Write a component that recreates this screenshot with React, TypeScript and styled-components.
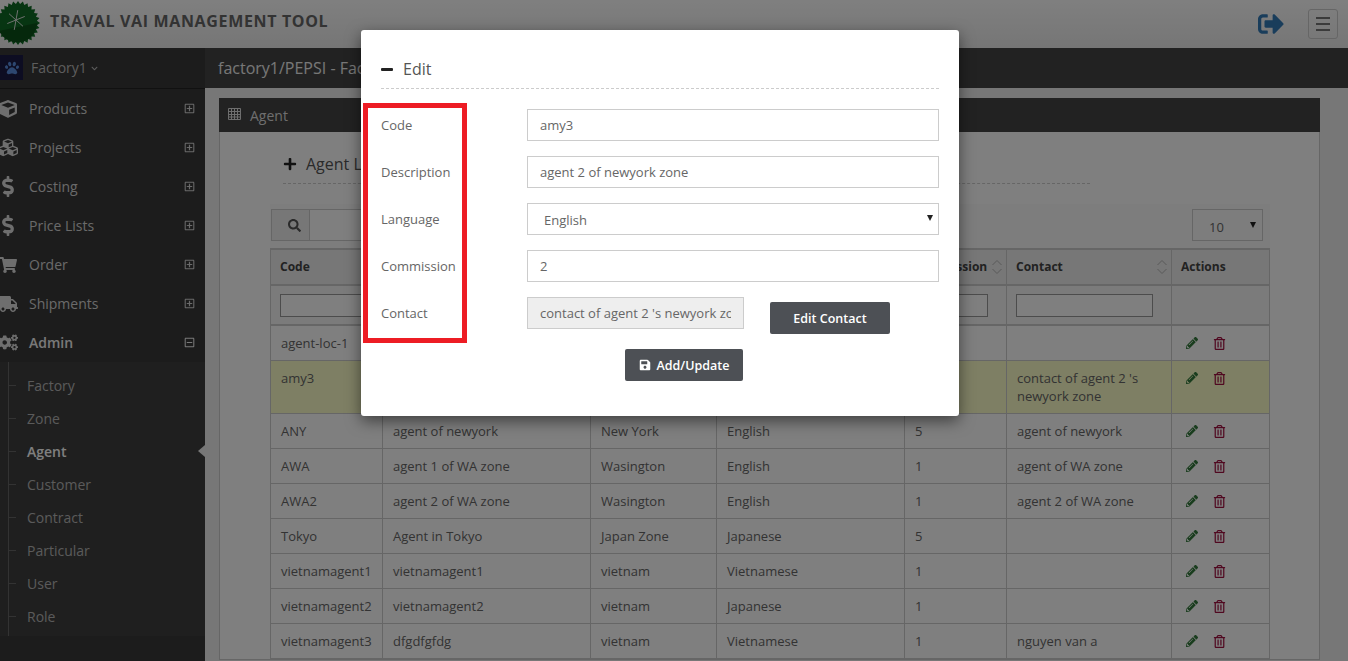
import styled, { createGlobalStyle } from "styled-components";
import {
  FaChevronDown,
  FaCogs,
  FaCube,
  FaCubes,
  FaDollarSign,
  FaPaw,
  FaPencilAlt,
  FaPlus,
  FaRegMinusSquare,
  FaRegPlusSquare,
  FaRegTrashAlt,
  FaSave,
  FaSearch,
  FaShoppingCart,
  FaSignOutAlt,
  FaTruck,
} from "react-icons/fa";

const menu = [
  { label: "Products", icon: <FaCube size={18} /> },
  { label: "Projects", icon: <FaCubes size={21} /> },
  { label: "Costing", icon: <FaDollarSign size={21} /> },
  { label: "Price Lists", icon: <FaDollarSign size={21} /> },
  { label: "Order", icon: <FaShoppingCart size={18} /> },
  { label: "Shipments", icon: <FaTruck size={20} /> },
];

const subMenu = ["Factory", "Zone", "Agent", "Customer", "Contract", "Particular", "User", "Role"];

const rows = [
  ["agent-loc-1", "agent of location 1", "New York", "English", "", ""],
  ["amy3", "agent 2 of newyork zone", "New York", "English", "2", "contact of agent 2 's newyork zone"],
  ["ANY", "agent of newyork", "New York", "English", "5", "agent of newyork"],
  ["AWA", "agent 1 of WA zone", "Wasington", "English", "1", "agent of WA zone"],
  ["AWA2", "agent 2 of WA zone", "Wasington", "English", "1", "agent 2 of WA zone"],
  ["Tokyo", "Agent in Tokyo", "Japan Zone", "Japanese", "5", ""],
  ["vietnamagent1", "vietnamagent1", "vietnam", "Vietnamese", "1", ""],
  ["vietnamagent2", "vietnamagent2", "vietnam", "Japanese", "1", ""],
  ["vietnamagent3", "dfgdfgfdg", "vietnam", "Vietnamese", "1", "nguyen van a"],
];

const columns = [
  { title: "Code", width: 112 },
  { title: "Description", width: 208 },
  { title: "Zone", width: 126 },
  { title: "Language", width: 188 },
  { title: "Commission", width: 102 },
  { title: "Contact", width: 165 },
];

// starburst edge of the logo
const burst = Array.from({ length: 56 }, (_, i) => {
  const r = i % 2 === 0 ? 22 : 19;
  const a = (i / 56) * Math.PI * 2;
  return `${22 + r * Math.cos(a)},${22 + r * Math.sin(a)}`;
}).join(" ");

const Logo = () => (
  <LogoSvg viewBox="0 0 44 44" width={44} height={44}>
    <polygon points={burst} fill="#0f6a24" />
    <path d="M3 30 A20 20 0 0 0 41 22 Z" fill="#0b5019" />
    <path
      d="M18 8 L18 28 M10 13 L26 23 M10 23 L26 13"
      transform="translate(2 1) rotate(10 18 18)"
      stroke="#e6e6e6"
      strokeWidth="0.9"
      fill="none"
    />
  </LogoSvg>
);

const SortIcon = () => (
  <SortSvg viewBox="0 0 12 16" width={12} height={16}>
    <path d="M1.5 6 L6 1.5 L10.5 6 M1.5 10 L6 14.5 L10.5 10" stroke="#b5b5b5" fill="none" />
  </SortSvg>
);

const GridIcon = () => (
  <svg viewBox="0 0 13 12" width={13} height={12}>
    <path
      d="M.5 .5H12.5V11.5H.5Z M.5 3.5H12.5 M.5 6.5H12.5 M.5 9H12.5 M3.5 .5V11.5 M6.5 .5V11.5 M9.5 .5V11.5"
      stroke="currentColor"
      fill="none"
    />
  </svg>
);

const App = () => {
  return (
    <Page>
      <GlobalStyle />
      <Header>
        <Logo />
        <Brand>TRAVAL VAI MANAGEMENT TOOL</Brand>
        <HeaderTools>
          <FaSignOutAlt size={26} color="#337ab7" />
          <Burger>
            <span />
            <span />
            <span />
          </Burger>
        </HeaderTools>
      </Header>

      <Body>
        <Sidebar>
          <FactoryRow>
            <PawBox>
              <FaPaw size={14} color="#5b8fe0" />
            </PawBox>
            Factory1
            <FaChevronDown size={7} />
          </FactoryRow>
          {menu.map((m) => (
            <MenuRow key={m.label}>
              <MenuIcon>{m.icon}</MenuIcon>
              {m.label}
              <FaRegPlusSquare size={11} />
            </MenuRow>
          ))}
          <MenuRow $open>
            <MenuIcon>
              <FaCogs size={21} />
            </MenuIcon>
            Admin
            <FaRegMinusSquare size={11} />
          </MenuRow>
          <SubList>
            {subMenu.map((s) => (
              <SubItem key={s} $active={s === "Agent"}>
                {s}
              </SubItem>
            ))}
          </SubList>
        </Sidebar>

        <Main>
          <TitleBar>factory1/PEPSI - Factory</TitleBar>
          <Panel>
            <PanelHead>
              <GridIcon />
              Agent
            </PanelHead>
            <PanelBody>
              <ListTitle>
                <FaPlus size={14} />
                Agent List
              </ListTitle>
              <Toolbar>
                <SearchBox>
                  <SearchAddon>
                    <FaSearch size={13} />
                  </SearchAddon>
                  <SearchInput />
                </SearchBox>
                <PageSize>
                  10
                  <Caret />
                </PageSize>
              </Toolbar>
              <Table>
                <colgroup>
                  {columns.map((c) => (
                    <col key={c.title} style={{ width: c.width }} />
                  ))}
                  <col />
                </colgroup>
                <thead>
                  <tr>
                    {columns.map((c) => (
                      <HeadCell key={c.title}>
                        {c.title}
                        <SortIcon />
                      </HeadCell>
                    ))}
                    <HeadCell>Actions</HeadCell>
                  </tr>
                  <tr>
                    {columns.map((c) => (
                      <FilterCell key={c.title}>
                        <FilterInput />
                      </FilterCell>
                    ))}
                    <FilterCell />
                  </tr>
                </thead>
                <tbody>
                  {rows.map((r) => (
                    <Row key={r[0]} $selected={r[0] === "amy3"}>
                      {r.map((v, i) => (
                        <Cell key={i}>{v}</Cell>
                      ))}
                      <Cell>
                        <Actions>
                          <FaPencilAlt size={12} color="#347a3c" />
                          <FaRegTrashAlt size={13} color="#a01040" />
                        </Actions>
                      </Cell>
                    </Row>
                  ))}
                </tbody>
              </Table>
            </PanelBody>
          </Panel>
        </Main>
      </Body>

      <Overlay />
      <Modal>
        <ModalTitle>
          <MinusBar />
          Edit
        </ModalTitle>
        <Form>
          <Label>Code</Label>
          <TextInput readOnly value="amy3" />
          <Label>Description</Label>
          <TextInput readOnly value="agent 2 of newyork zone" />
          <Label>Language</Label>
          <SelectWrap>
            <Select defaultValue="English">
              <option>English</option>
              <option>Japanese</option>
              <option>Vietnamese</option>
            </Select>
            <Caret />
          </SelectWrap>
          <Label>Commission</Label>
          <TextInput readOnly value="2" />
          <Label>Contact</Label>
          <ContactRow>
            <ContactInput disabled value="contact of agent 2 's newyork zone" />
            <EditButton>Edit Contact</EditButton>
          </ContactRow>
        </Form>
        <SaveButton>
          <FaSave size={12} />
          Add/Update
        </SaveButton>
        <Highlight />
      </Modal>
    </Page>
  );
};

export default App;

const GlobalStyle = createGlobalStyle`
  html, body {
    margin: 0;
    padding: 0;
    height: 100%;
    overflow: hidden;
  }
  body {
    font-family: "Open Sans", "Liberation Sans", sans-serif;
    font-size: 13px;
    color: #666;
  }
  * {
    box-sizing: border-box;
  }
`;

const Page = styled.div`
  position: relative;
  width: 1348px;
  height: 661px;
  overflow: hidden;
  background: #eee;
`;

const Header = styled.header`
  display: flex;
  align-items: center;
  height: 48px;
  padding-right: 10px;
  background: linear-gradient(#fff, #ececec);
`;

const LogoSvg = styled.svg`
  flex: none;
  margin: -3px 0 0 -4px;
`;

const Brand = styled.div`
  margin: -6px 0 0 10px;
  font-size: 16px;
  font-weight: 700;
  letter-spacing: 0.65px;
  color: #666;
`;

const HeaderTools = styled.div`
  display: flex;
  align-items: center;
  gap: 24px;
  margin-left: auto;
`;

const Burger = styled.div`
  display: flex;
  flex-direction: column;
  justify-content: center;
  gap: 4px;
  width: 30px;
  height: 30px;
  padding: 0 7px;
  border: 1px solid #ccc;
  border-radius: 3px;

  span {
    height: 2px;
    background: #777;
  }
`;

const Body = styled.div`
  display: flex;
  height: 613px;
`;

const Sidebar = styled.nav`
  flex: none;
  width: 205px;
  background: #393939;
  color: #ccc;
  font-size: 14px;
`;

const FactoryRow = styled.div`
  display: flex;
  align-items: center;
  height: 41px;
  padding-bottom: 1px;
  border-bottom: 1px solid #222;
  color: #bbb;

  > svg {
    margin: 1px 0 0 4px;
  }
`;

const PawBox = styled.div`
  display: flex;
  align-items: center;
  justify-content: center;
  width: 23px;
  height: 25px;
  margin-right: 8px;
  background: #1a1a44;
`;

const MenuRow = styled.div<{ $open?: boolean }>`
  display: flex;
  align-items: center;
  height: 39px;
  padding-right: 10px;
  color: ${(p) => (p.$open ? "#f2f2f2" : "#d4d4d4")};
  font-weight: ${(p) => (p.$open ? 600 : 400)};

  > svg {
    margin-left: auto;
  }
`;

const MenuIcon = styled.span`
  display: flex;
  align-items: center;
  justify-content: center;
  width: 20px;
  margin: 0 11px 0 -2px;
  color: #ddd;
`;

const SubList = styled.div`
  position: relative;
  height: 274px;
  padding: 7px 0 3px;
  background: #3f3f3f;

  &::before {
    content: "";
    position: absolute;
    left: 8px;
    top: 0;
    bottom: 0;
    border-left: 1px solid #666;
  }
`;

const SubItem = styled.div<{ $active?: boolean }>`
  position: relative;
  height: 33px;
  padding-left: 27px;
  line-height: 33px;
  color: ${(p) => (p.$active ? "#fff" : "#b5b5b5")};
  font-weight: ${(p) => (p.$active ? 600 : 400)};

  &::before {
    content: "";
    position: absolute;
    left: 9px;
    top: 16px;
    width: 7px;
    border-top: 1px solid #666;
  }

  ${(p) =>
    p.$active &&
    `&::after {
      content: "";
      position: absolute;
      right: 0;
      top: 10px;
      border: 6px solid transparent;
      border-left-width: 0;
      border-right: 7px solid #eee;
    }`}
`;

const Main = styled.main`
  flex: 1;
  min-width: 0;
`;

const TitleBar = styled.div`
  height: 40px;
  padding-left: 13px;
  line-height: 40px;
  font-size: 16px;
  background: #444;
  color: #eee;
`;

const Panel = styled.section`
  width: 1101px;
  margin: 10px 0 0 14px;
  background: #fff;
  border: 1px solid #ccc;
  border-top: 0;
`;

const PanelHead = styled.div`
  display: flex;
  align-items: center;
  gap: 9px;
  height: 34px;
  margin: 0 -1px;
  padding-left: 9px;
  font-size: 14px;
  background: #444;
  color: #ddd;

  svg {
    margin-top: -2px;
  }
`;

const PanelBody = styled.div`
  padding: 16px 49px 0 50px;
`;

const ListTitle = styled.div`
  display: flex;
  align-items: center;
  gap: 9px;
  width: 807px;
  height: 36px;
  margin-left: 13px;
  padding-bottom: 4px;
  font-size: 16px;
  color: #555;
  border-bottom: 1px dashed #ccc;

  svg {
    color: #222;
  }
`;

const Toolbar = styled.div`
  display: flex;
  justify-content: space-between;
  height: 44px;
  margin-top: 20px;
  padding: 5px 7px 0 1px;
  background: #fafafa;
`;

const SearchBox = styled.div`
  display: flex;
  width: 530px;
  height: 32px;
  border: 1px solid #ccc;
`;

const SearchAddon = styled.div`
  display: flex;
  align-items: center;
  justify-content: center;
  width: 38px;
  padding-left: 8px;
  background: #eee;
  border-right: 1px solid #ccc;
  color: #555;
`;

const SearchInput = styled.input`
  flex: 1;
  border: 0;
  background: #fff;
`;

const PageSize = styled.div`
  position: relative;
  width: 71px;
  height: 32px;
  padding: 4px 0 0 16px;
  line-height: 26px;
  border: 1px solid #ccc;
  color: #666;
`;

const Caret = styled.span`
  position: absolute;
  right: 6px;
  top: 12px;
  border: 3.5px solid transparent;
  border-top: 6px solid #222;
  border-bottom: 0;
`;

const Table = styled.table`
  width: 1000px;
  table-layout: fixed;
  border-collapse: collapse;
  font-size: 13px;
  line-height: 18px;
`;

const HeadCell = styled.th`
  position: relative;
  height: 36px;
  padding: 0 9px;
  text-align: left;
  font-size: 12px;
  font-weight: 700;
  color: #444;
  background: #eee;
  border: 1px solid #ccc;
  border-top-width: 2px;
  border-bottom-width: 2px;
`;

const SortSvg = styled.svg`
  position: absolute;
  right: 3px;
  top: 9px;
`;

const FilterCell = styled.td`
  height: 40px;
  padding: 0 18px 0 9px;
  background: #f6f6f6;
  border: 1px solid #ccc;
  border-bottom-width: 2px;
`;

const FilterInput = styled.input`
  display: block;
  width: 100%;
  height: 23px;
  background: #fff;
  border: 1px solid #999;
`;

const Row = styled.tr<{ $selected?: boolean }>`
  background: ${(p) => (p.$selected ? "#fdffc8" : "#fff")};
`;

const Cell = styled.td`
  padding: 8px 10px;
  vertical-align: top;
  border: 1px solid #ccc;
  color: #666;
`;

const Actions = styled.div`
  display: flex;
  align-items: center;
  gap: 15px;
  height: 18px;
  padding-left: 4px;
`;

const Overlay = styled.div`
  position: absolute;
  inset: 0;
  background: rgba(0, 0, 0, 0.5);
`;

const Modal = styled.div`
  position: absolute;
  left: 361px;
  top: 30px;
  width: 598px;
  height: 386px;
  padding: 20px;
  background: #fff;
  border-radius: 3px;
  box-shadow: 0 5px 15px rgba(0, 0, 0, 0.5);
`;

const ModalTitle = styled.div`
  display: flex;
  align-items: center;
  gap: 10px;
  height: 39px;
  font-size: 16px;
  color: #555;
  border-bottom: 1px dashed #ccc;
`;

const MinusBar = styled.span`
  width: 12px;
  height: 3px;
  background: #222;
  border-radius: 1px;
`;

const Form = styled.div`
  display: grid;
  grid-template-columns: 146px 412px;
  grid-auto-rows: 32px;
  row-gap: 15px;
  align-items: center;
  margin-top: 20px;
`;

const Label = styled.label`
  font-size: 13px;
  color: #666;
  margin-top: -1px;
`;

const TextInput = styled.input`
  width: 100%;
  height: 32px;
  padding: 0 12px;
  font: inherit;
  font-size: 13px;
  color: #666;
  background: #fff;
  border: 1px solid #ccc;
  outline: none;
`;

const SelectWrap = styled.div`
  position: relative;
  height: 32px;
`;

const Select = styled.select`
  appearance: none;
  width: 100%;
  height: 32px;
  padding: 2px 16px 0;
  font: inherit;
  font-size: 13px;
  color: #666;
  background: #fff;
  border: 1px solid #ccc;
  border-radius: 0;
  outline: none;
`;

const ContactRow = styled.div`
  display: flex;
  align-items: flex-start;
  height: 37px;
  align-self: start;
`;

const ContactInput = styled(TextInput)`
  flex: none;
  width: 217px;
  background: #eee;
`;

const EditButton = styled.button`
  flex: none;
  width: 120px;
  height: 32px;
  margin: 5px 0 0 26px;
  padding: 0;
  font: inherit;
  font-size: 12.5px;
  font-weight: 600;
  color: #fff;
  background: #4d5055;
  border: 0;
  border-radius: 2px;
`;

const SaveButton = styled(EditButton)`
  display: flex;
  align-items: center;
  justify-content: center;
  gap: 6px;
  width: 118px;
  margin: 20px 0 0 244px;
`;

const Highlight = styled.div`
  position: absolute;
  left: 2px;
  top: 73px;
  width: 104px;
  height: 240px;
  border: 5px solid #ed1c24;
`;
